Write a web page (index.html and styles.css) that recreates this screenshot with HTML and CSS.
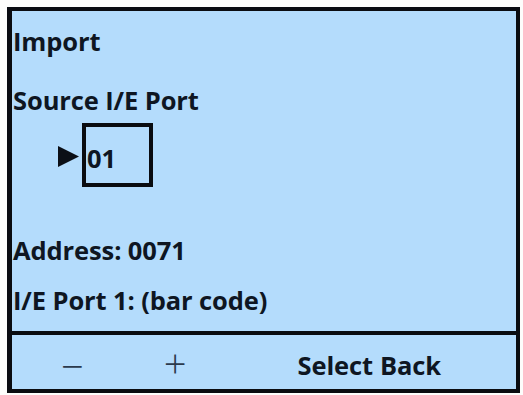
FILE: index.html
```html
<!DOCTYPE html>
<html>
<head>
<meta charset="utf-8">
<link rel="stylesheet" href="styles.css">
</head>
<body>
<div class="screen">
  <div class="content">
    <div class="line title">Import</div>
    <div class="line source">Source I/E Port</div>
    <div class="port-row">
      <svg class="pointer" width="21" height="21" viewBox="0 0 21 21"><polygon points="0,0 21,10.5 0,21" fill="#0b0f16"/></svg>
      <div class="port-box">01</div>
    </div>
    <div class="line address">Address: 0071</div>
    <div class="line port">I/E Port 1: (bar code)</div>
  </div>
  <div class="softkeys">
    <span class="key sym minus">−</span>
    <span class="key sym plus">+</span>
    <span class="key select">Select</span>
    <span class="key back">Back</span>
  </div>
</div>
</body>
</html>
```
FILE: styles.css
```css
html, body {
  margin: 0;
  padding: 0;
  background: #fdfdfb;
}
body {
  font-family: "Open Sans", "DejaVu Sans", sans-serif;
  color: #0e1622;
}
.screen {
  margin: 7px 0 0 7px;
  width: 513px;
  height: 386px;
  box-sizing: border-box;
  border: 4px solid #0a0c10;
  border-left-width: 5px;
  background: #b4dcfc;
  display: flex;
  flex-direction: column;
}
.content {
  height: 320px;
  border-bottom: 4px solid #0a0c10;
  padding-left: 1px;
  box-sizing: content-box;
}
.line {
  font-size: 25.5px;
  font-weight: 700;
  line-height: 34px;
  height: 34px;
  white-space: nowrap;
  letter-spacing: -0.1px;
}
.title { margin-top: 13px; }
.source { margin-top: 25px; }
.port-row {
  margin-top: 6px;
  display: flex;
  align-items: center;
  padding-left: 45px;
}
.pointer {
  display: block;
  margin-top: 3px;
}
.port-box {
  margin-left: 3px;
  width: 71px;
  height: 64px;
  box-sizing: border-box;
  border: 4px solid #0a0c10;
  font-size: 25.5px;
  font-weight: 700;
  line-height: 34px;
  padding: 14px 0 0 1px;
}
.address { margin-top: 46px; }
.port { margin-top: 16px; }
.softkeys {
  flex: 1;
  display: flex;
  align-items: flex-start;
  font-size: 25.5px;
  font-weight: 700;
  line-height: 34px;
  padding-top: 13px;
}
.key { white-space: nowrap; letter-spacing: -0.1px; }
.sym {
  font-weight: 300;
  font-size: 40px;
  color: #2b3a4c;
}
.minus { margin-left: 49px; margin-top: 1px; }
.plus { margin-left: 80px; margin-top: -2px; }
.select { margin-left: 111px; }
.back { margin-left: 7px; }
```
